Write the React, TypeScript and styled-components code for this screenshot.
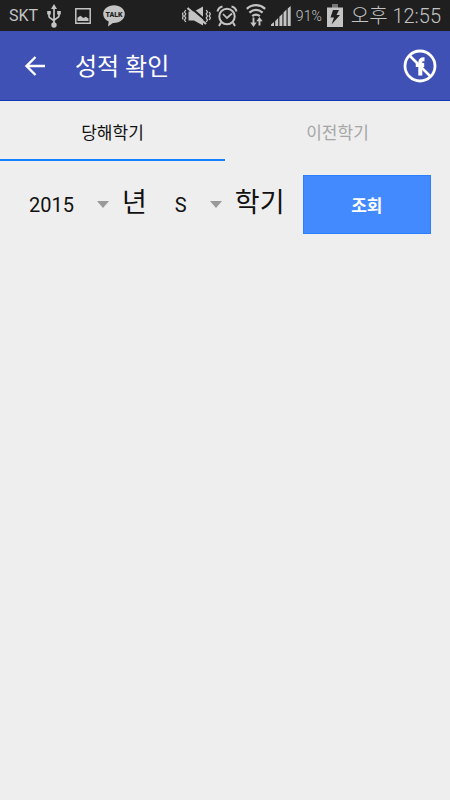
import React, { useState } from "react";
import styled, { createGlobalStyle } from "styled-components";

const GlobalStyle = createGlobalStyle`
  * { box-sizing: border-box; }
  html, body { margin: 0; background: #eeeeee; }
  body, button, select { font-family: Roboto, "Noto Sans CJK KR", sans-serif; }
`;

const Screen = styled.div`
  min-height: 100vh;
  background: #eeeeee;
  color: #111111;
`;

const StatusBar = styled.div`
  display: flex;
  align-items: center;
  justify-content: space-between;
  height: 31px;
  padding: 0 9px;
  background: #1f1f1f;
  color: #c4c4c4;
`;

const StatusGroup = styled.div<{ $gap: number }>`
  display: flex;
  align-items: center;
  gap: ${(p) => p.$gap}px;
  white-space: nowrap;
  svg { display: block; flex: none; }
`;

const Carrier = styled.span`
  font-size: 16px;
  line-height: 30px;
`;

const Percent = styled.span`
  font-size: 14px;
  font-weight: 300;
  line-height: 30px;
`;

const Clock = styled.span`
  font-size: 20px;
  font-weight: 300;
  line-height: 30px;
`;

const Toolbar = styled.header`
  display: flex;
  align-items: center;
  height: 70px;
  padding: 0 13px 0 20px;
  background: #3f51b5;
  border-bottom: 1px solid #1038b8;
`;

const IconButton = styled.button`
  display: flex;
  padding: 0;
  border: 0;
  background: none;
  color: #ffffff;
  cursor: pointer;
`;

const Title = styled.h1`
  flex: 1;
  margin: 0;
  padding: 2px 0 0 24px;
  font-size: 24px;
  font-weight: 400;
  line-height: 36px;
  color: #ffffff;
`;

const Tabs = styled.div`
  display: grid;
  grid-template-columns: 1fr 1fr;
`;

const Tab = styled.button<{ $active: boolean }>`
  height: 60px;
  padding: 5px 0 0;
  border: 0;
  border-bottom: 2px solid ${(p) => (p.$active ? "#1480ff" : "transparent")};
  background: none;
  font-size: 17px;
  line-height: 24px;
  color: ${(p) => (p.$active ? "#111111" : "#a6a6a6")};
  cursor: pointer;
`;

const SearchForm = styled.form`
  display: flex;
  align-items: center;
  padding: 14px 19px 0 29px;
`;

const SelectBox = styled.div<{ $width: number }>`
  display: grid;
  align-items: center;
  width: ${(p) => p.$width}px;
  > * { grid-area: 1 / 1; }
  svg { justify-self: end; pointer-events: none; }
`;

const Select = styled.select`
  appearance: none;
  width: 100%;
  height: 40px;
  margin: 0;
  padding: 0;
  border: 0;
  background: none;
  font-size: 20px;
  color: #111111;
`;

const UnitLabel = styled.label<{ $gapAfter: number }>`
  padding: 0 ${(p) => p.$gapAfter}px 4px 13px;
  font-size: 27px;
  line-height: 40px;
  white-space: nowrap;
`;

const SearchButton = styled.button`
  flex: 1;
  height: 59px;
  padding: 0;
  border: 1px solid #2a7fff;
  background: #448aff;
  font-size: 17px;
  font-weight: 700;
  color: #ffffff;
  cursor: pointer;
`;

const UsbIcon = () => (
  <svg width="14" height="24" viewBox="0 0 14 24" fill="none" stroke="#c4c4c4" strokeWidth="1.7" aria-hidden="true">
    <path d="M7 4v17M2 8v4.5c0 2 5 2.500 5 5M12 8v4c0 2-5 2.500-5 5" />
    <path d="M7 0l3 5H4zM.2 7h3.600v3.500H.2zM10.200 7h3.600v3.500h-3.600z" fill="#c4c4c4" stroke="none" />
    <circle cx="7" cy="21" r="2.700" fill="#c4c4c4" stroke="none" />
  </svg>
);

const PictureIcon = () => (
  <svg width="18" height="16" viewBox="-2 0 18 16" aria-hidden="true">
    <path d="M.8.800h14.400v14.400H.8z" fill="none" stroke="#c4c4c4" strokeWidth="1.500" />
    <path d="M2.500 13V9.800l2.800-2L8.500 10l2.300-1.200 2.700 1.700V13z" fill="#c4c4c4" />
  </svg>
);

const TalkIcon = () => (
  <svg width="22" height="22" viewBox="0 0 22 22" aria-hidden="true">
    <path d="M11 .3C5 .3.200 4.200.200 9c0 3.300 2.200 6 5.500 7.600L5 21.500l5-3.600c6.700.3 11.800-3.700 11.800-8.900C21.800 4.200 17 .3 11 .3z" fill="#c4c4c4" />
    <text x="11" y="12" textAnchor="middle" fontFamily="Roboto, sans-serif" fontSize="7" fontWeight="900" fill="#1f1f1f">TALK</text>
  </svg>
);

const MuteIcon = () => (
  <svg width="30" height="22" viewBox="0 0 30 22" fill="none" stroke="#c4c4c4" aria-hidden="true">
    <path d="M6.500 6.500H12l9-5v19l-9-5H6.500z" fill="#c4c4c4" stroke="none" />
    <path d="M7.500 1.500l18 15.500" stroke="#1f1f1f" strokeWidth="2.200" />
    <path d="M5.500 3L24 19" strokeWidth="2.200" />
    <path d="M3.800 5L2.500 7l1.300 2-1.300 2 1.300 2-1.300 2 1.300 2M1.200 7.500L.5 9l.7 2-.7 2 .7 1.500M24.200 5l1.300 2-1.300 2 1.300 2-1.300 2 1.300 2-1.300 2M27.300 7l1 2-1 2 1 2-1 2" strokeWidth="1.300" />
  </svg>
);

const AlarmIcon = () => (
  <svg width="22" height="22" viewBox="0 0 22 22" fill="none" stroke="#c4c4c4" aria-hidden="true">
    <circle cx="11" cy="11.500" r="7.700" strokeWidth="2" />
    <path d="M1.500 6.500C2 3.800 4 2 6.500 1.500M20.500 6.500C20 3.800 18 2 15.500 1.500M5 17.500L3 21M17 17.500l2 3.500" strokeWidth="2" />
    <path d="M7 9l4 4 5-4.500" strokeWidth="1.700" />
  </svg>
);

const WifiIcon = () => (
  <svg width="20" height="24" viewBox="0 0 20 24" fill="none" stroke="#c4c4c4" aria-hidden="true">
    <path d="M.8 4.800c5.500-4.800 12.900-4.800 18.400 0M3.400 8.600c4.200-3.500 9-3.500 13.200 0M6.200 12.200c2.400-2 5.200-2 7.600 0" strokeWidth="2.300" />
    <path d="M7.500 13.500v7M13.500 21.500v-6" strokeWidth="1.900" />
    <path d="M4.300 18.500h6.400L7.500 23zM10.300 17.300h6.400L13.500 13z" fill="#c4c4c4" stroke="none" />
  </svg>
);

const SignalIcon = () => (
  <svg width="20" height="20" viewBox="0 0 20 20" fill="#c4c4c4" aria-hidden="true">
    <path d="M0 20v-1.500l3-2.500v4zM4.200 20v-5l3-3v8zM8.400 20v-9.200l3-3V20zM12.500 20V6.600l3-3V20zM16.700 20V2.500l3-2.500v20z" />
  </svg>
);

const BatteryIcon = () => (
  <svg width="16" height="23" viewBox="0 0 16 23" aria-hidden="true">
    <path d="M5 0h6v4H5z" fill="#777777" />
    <path d="M0 3.500h16V23H0z" fill="#c4c4c4" />
    <path d="M6 6h6l-2.500 5H13l-8.500 9.500L7 13.500H3.500z" fill="#1f1f1f" />
  </svg>
);

const BackIcon = () => (
  <svg width="31" height="30" viewBox="0 0 31 30" fill="none" stroke="currentColor" strokeWidth="2.400" aria-hidden="true">
    <path d="M25 15H7M15.500 6L6.500 15l9 9" />
  </svg>
);

const FacebookOffIcon = () => (
  <svg width="34" height="34" viewBox="0 0 34 34" fill="none" stroke="currentColor" aria-hidden="true">
    <circle cx="17" cy="17" r="15" strokeWidth="2.800" />
    <path d="M17.300 26.500V13.500c0-2.600 1.200-3.300 4.200-3.100M12.800 16h8.400" strokeWidth="4" />
    <path d="M6.500 6.500l21 21" strokeWidth="2.500" />
  </svg>
);

const DropdownArrow = () => (
  <svg width="12" height="7" viewBox="0 0 12 7" aria-hidden="true">
    <path d="M0 0h12L6 7z" fill="#999999" />
  </svg>
);

const tabs = ["당해학기", "이전학기"];

export default function App() {
  const [active, setActive] = useState(0);

  return (
    <Screen>
      <GlobalStyle />
      <StatusBar>
        <StatusGroup $gap={9}>
          <Carrier>SKT</Carrier>
          <StatusGroup $gap={12}>
            <UsbIcon />
            <PictureIcon />
            <TalkIcon />
          </StatusGroup>
        </StatusGroup>
        <StatusGroup $gap={8}>
          <StatusGroup $gap={4}>
            <MuteIcon />
            <AlarmIcon />
          </StatusGroup>
          <StatusGroup $gap={5}>
            <WifiIcon />
            <SignalIcon />
            <Percent>91%</Percent>
            <BatteryIcon />
          </StatusGroup>
          <Clock>오후 12:55</Clock>
        </StatusGroup>
      </StatusBar>

      <Toolbar>
        <IconButton type="button" aria-label="뒤로">
          <BackIcon />
        </IconButton>
        <Title>성적 확인</Title>
        <IconButton type="button" aria-label="페이스북 연결 안 됨">
          <FacebookOffIcon />
        </IconButton>
      </Toolbar>

      <Tabs role="tablist">
        {tabs.map((name, i) => (
          <Tab
            key={name}
            type="button"
            role="tab"
            aria-selected={i === active}
            $active={i === active}
            onClick={() => setActive(i)}
          >
            {name}
          </Tab>
        ))}
      </Tabs>

      <SearchForm onSubmit={(e) => e.preventDefault()}>
        <SelectBox $width={80}>
          <Select id="year" defaultValue="2015">
            <option>2015</option>
          </Select>
          <DropdownArrow />
        </SelectBox>
        <UnitLabel htmlFor="year" $gapAfter={28}>년</UnitLabel>
        <SelectBox $width={47}>
          <Select id="term" defaultValue="S">
            <option>S</option>
          </Select>
          <DropdownArrow />
        </SelectBox>
        <UnitLabel htmlFor="term" $gapAfter={18}>학기</UnitLabel>
        <SearchButton type="submit">조회</SearchButton>
      </SearchForm>
    </Screen>
  );
}
